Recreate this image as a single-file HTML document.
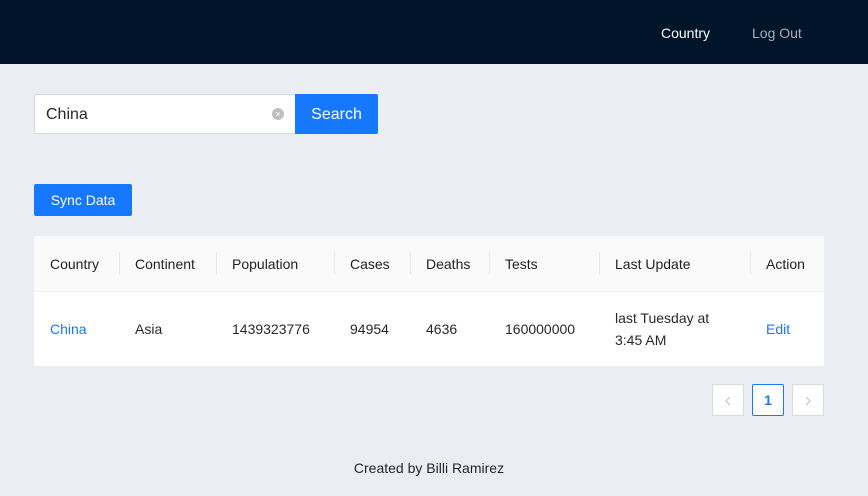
<!DOCTYPE html>
<html><head><style>
*{box-sizing:border-box;margin:0;padding:0}
body{width:868px;height:496px;background:#eaedf1;font-family:"Liberation Sans",sans-serif;font-size:14px;color:rgba(0,0,0,.85);position:relative;overflow:hidden}
.hdr{height:64px;background:#001529;position:relative}
.hdr span{position:absolute;top:25px;font-size:14px}
.abs{position:absolute}
.inp{left:34px;top:94px;width:262px;height:40px;background:#fff;border:1px solid #d9d9d9;border-radius:2px 0 0 2px;font-size:16px;padding:11px 11px}
.clr{left:272px;top:108px;width:12px;height:12px;border-radius:50%;background:#bfbfbf;color:#fff;font-size:9px;line-height:12px;text-align:center}
.btn{background:#1677ff;color:#fff;text-align:center}
table{position:absolute;left:34px;top:236px;width:790px;border-collapse:collapse;background:#fff}
th{background:#fafafa;font-weight:normal;text-align:left;height:55px;padding:1px 16px 0;border-bottom:1px solid #f0f0f0;position:relative;color:rgba(0,0,0,.88)}
th+th:before{content:"";position:absolute;left:0;top:16px;height:22px;width:1px;background:#e8e8e8}
td{height:75px;padding:1px 16px 0;line-height:22px}
a{color:#1677ff;text-decoration:none}
.pg{top:384px;width:32px;height:32px;border:1px solid #d9d9d9;background:#fff;text-align:center;line-height:30px;color:#bbb;border-radius:2px;font-size:14px}
</style></head><body>
<div class="hdr"><span style="left:661px;color:#fff">Country</span><span style="left:752px;color:rgba(255,255,255,.65)">Log Out</span></div>
<div class="abs inp">China</div>
<div class="abs clr">×</div>
<div class="abs btn" style="left:295px;top:94px;width:83px;height:40px;line-height:41px;font-size:16px;border-radius:0 2px 2px 0">Search</div>
<div class="abs btn" style="left:34px;top:184px;width:98px;height:32px;line-height:33px;border-radius:2px">Sync Data</div>
<table>
<tr><th style="width:85px">Country</th><th style="width:97px">Continent</th><th style="width:118px">Population</th><th style="width:76px">Cases</th><th style="width:79px">Deaths</th><th style="width:110px">Tests</th><th style="width:151px">Last Update</th><th>Action</th></tr>
<tr><td><a>China</a></td><td>Asia</td><td>1439323776</td><td>94954</td><td>4636</td><td>160000000</td><td>last Tuesday at<br>3:45 AM</td><td><a>Edit</a></td></tr>
</table>
<div class="abs pg" style="left:712px"><svg width="10" height="10" viewBox="0 0 10 10" style="vertical-align:-1px"><path d="M7 1L3 5l4 4" fill="none" stroke="#bbb" stroke-width="1"/></svg></div>
<div class="abs pg" style="left:752px;border-color:#1677ff;color:#1677ff;font-weight:bold">1</div>
<div class="abs pg" style="left:792px"><svg width="10" height="10" viewBox="0 0 10 10" style="vertical-align:-1px"><path d="M3 1l4 4-4 4" fill="none" stroke="#bbb" stroke-width="1"/></svg></div>
<div class="abs" style="left:0;width:858px;top:460px;text-align:center">Created by Billi Ramirez</div>
</body></html>
